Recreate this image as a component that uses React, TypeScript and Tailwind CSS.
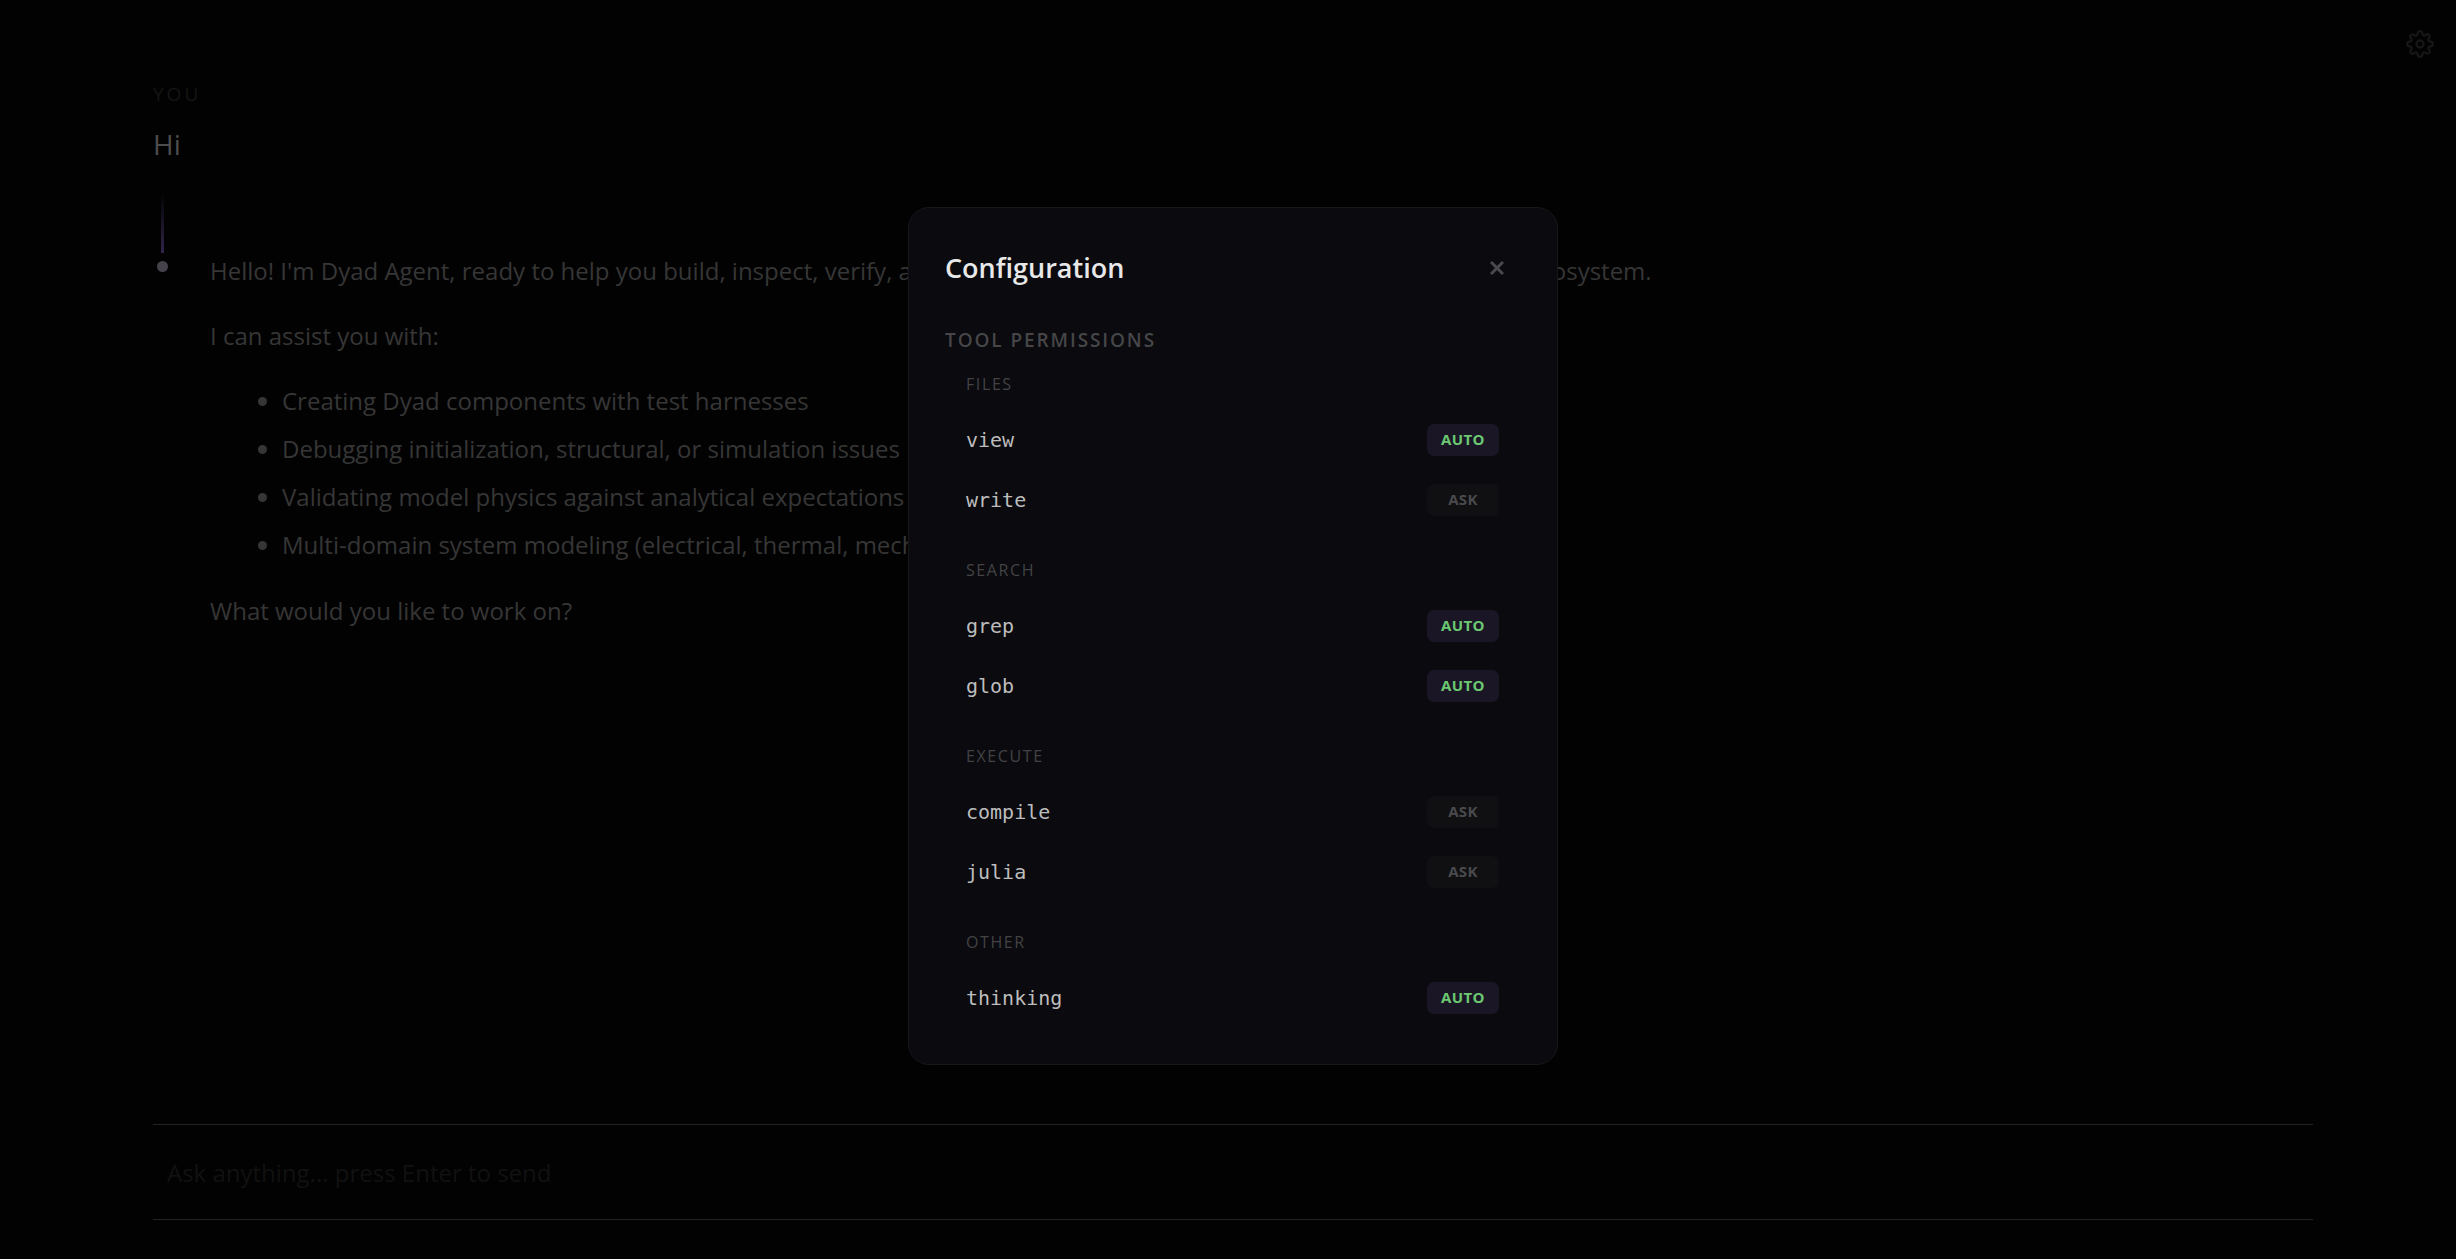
import { useState } from "react";
import { FiSettings } from "react-icons/fi";

type Mode = "auto" | "ask";

const groups: { name: string; tools: string[] }[] = [
  { name: "Files", tools: ["view", "write"] },
  { name: "Search", tools: ["grep", "glob"] },
  { name: "Execute", tools: ["compile", "julia"] },
  { name: "Other", tools: ["thinking"] },
];

const defaults: Record<string, Mode> = {
  view: "auto",
  write: "ask",
  grep: "auto",
  glob: "auto",
  compile: "ask",
  julia: "ask",
  thinking: "auto",
};

const abilities = [
  "Creating Dyad components with test harnesses",
  "Debugging initialization, structural, or simulation issues",
  "Validating model physics against analytical expectations",
  "Multi-domain system modeling (electrical, thermal, mechanical)",
];

function PermissionRow({ tool, mode, onToggle }: { tool: string; mode: Mode; onToggle: () => void }) {
  return (
    <li className="flex h-[60px] items-center justify-between">
      <span className="font-['DejaVu_Sans_Mono',monospace] text-[20px] leading-7 text-[#bdbdbd]">{tool}</span>
      <button
        aria-label={`${tool}: ${mode}`}
        onClick={onToggle}
        className={`h-8 w-[72px] rounded-[7px] text-[15px] font-bold tracking-wide uppercase ${
          mode === "auto" ? "bg-[#1a1625] text-[#6cc872]" : "bg-[#101013] text-[#4a4a4c]"
        }`}
      >
        {mode}
      </button>
    </li>
  );
}

function ConfigDialog({ onClose }: { onClose: () => void }) {
  const [modes, setModes] = useState(defaults);

  function toggle(tool: string) {
    setModes((m) => ({ ...m, [tool]: m[tool] === "auto" ? "ask" : "auto" }));
  }

  return (
    <div className="fixed inset-0 flex items-center justify-center pt-3 pl-[10px]">
      <div
        role="dialog"
        aria-labelledby="config-title"
        className="w-full max-w-[650px] rounded-[21px] border border-[#17171a] bg-[#0a0a0f] px-9 pt-9 pb-9"
      >
        <div className="flex items-center justify-between">
          <h2 id="config-title" className="text-[27px] leading-12 font-semibold text-[#e8e8e8]">
            Configuration
          </h2>
          <button aria-label="Close" onClick={onClose} className="flex size-12 items-center justify-center text-[#4a4a4c]">
            <svg viewBox="0 0 14 14" className="size-[14px]" fill="none" stroke="currentColor" strokeWidth="3">
              <path d="M1 1l12 12M13 1L1 13" />
            </svg>
          </button>
        </div>
        <h3 className="mt-8 text-[19px] leading-8 font-semibold tracking-widest text-[#464648] uppercase">
          Tool Permissions
        </h3>
        <div className="flex flex-col gap-7 pt-4 pr-[22px] pl-[21px]">
          {groups.map((g) => (
            <section key={g.name}>
              <h4 className="mb-[14px] text-[16px] leading-6 tracking-widest text-[#434345] uppercase">{g.name}</h4>
              <ul>
                {g.tools.map((t) => (
                  <PermissionRow key={t} tool={t} mode={modes[t]} onToggle={() => toggle(t)} />
                ))}
              </ul>
            </section>
          ))}
        </div>
      </div>
    </div>
  );
}

export default function App() {
  const [open, setOpen] = useState(true);

  return (
    <div className="relative flex min-h-screen flex-col bg-[#020202] pr-[143px] pl-[153px] font-['Open_Sans','Noto_Sans',sans-serif] text-[#363636]">
      <button
        aria-label="Settings"
        onClick={() => setOpen(true)}
        className="absolute top-[30px] right-[22px] text-[#161616]"
      >
        <FiSettings size={28} />
      </button>

      <main className="flex-1 pt-20">
        <p className="text-[19px] leading-7 tracking-[3px] text-[#151515] uppercase">You</p>
        <p className="mt-4 text-[28px] leading-10 text-[#4c4c4c]">Hi</p>

        <article className="mt-7 flex gap-[39px]">
          <div className="flex w-[18px] flex-col items-center gap-2">
            <span className="h-[61px] w-[3px] bg-linear-to-b from-transparent to-[#30244a]" />
            <span className="size-[11px] rounded-full bg-[#45424c]" />
          </div>
          <div className="mt-[55px] text-[24px] leading-[47px]">
            <p>Hello! I'm Dyad Agent, ready to help you build, inspect, verify, and simulate physical models within the Dyad modeling ecosystem.</p>
            <p className="mt-[18px]">I can assist you with:</p>
            <ul className="mt-[18px] list-disc pl-[72px]">
              {abilities.map((a) => (
                <li key={a} className="leading-12">{a}</li>
              ))}
            </ul>
            <p className="mt-[18px]">What would you like to work on?</p>
          </div>
        </article>
      </main>

      <form className="mb-[39px] border-y border-[#222222] px-[14px] py-6" onSubmit={(e) => e.preventDefault()}>
        <input
          aria-label="Message"
          placeholder="Ask anything... press Enter to send"
          className="block h-[46px] w-full bg-transparent text-[24px] outline-none placeholder:text-[#111111]"
        />
      </form>

      {open && <ConfigDialog onClose={() => setOpen(false)} />}
    </div>
  );
}
